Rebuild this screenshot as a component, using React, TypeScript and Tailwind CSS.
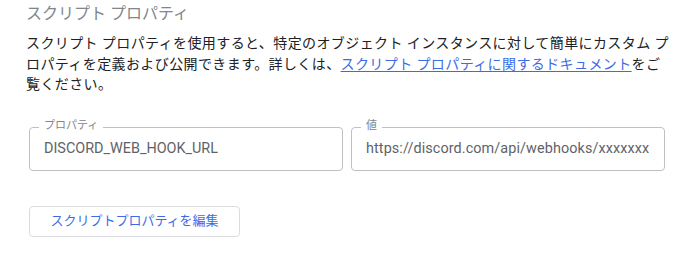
export default function App() {
  return (
    <div className="bg-white w-[700px] h-[253px] px-[26px] pt-[2px] font-['Roboto','Noto_Sans_CJK_JP',sans-serif]">
      <h2 className="text-[16px] leading-[24px] text-[#80868b] font-normal">スクリプト プロパティ</h2>
      <p className="mt-[7px] w-[660px] text-[14px] leading-[20.5px] tracking-[0.4px] text-[#202124] whitespace-nowrap">
        スクリプト プロパティを使用すると、特定のオブジェクト インスタンスに対して簡単にカスタム プ
        <br />
        ロパティを定義および公開できます。詳しくは、
        <a className="text-[#3d6be6] underline underline-offset-2" href="#">スクリプト プロパティに関するドキュメント</a>
        をご
        <br />
        覧ください。
      </p>
      <div className="mt-[32px] ml-[3px] flex gap-[8px]">
        <div className="relative w-[314px] h-[44px] border border-[#bdc1c6] rounded-[4px] flex items-center px-[14px]">
          <span className="absolute -top-[9px] left-[9px] bg-white px-[5px] text-[11px] leading-[14px] text-[#80868b]">プロパティ</span>
          <span className="text-[14.4px] text-[#5f6368] font-['Roboto',sans-serif] whitespace-nowrap overflow-hidden">DISCORD_WEB_HOOK_URL</span>
        </div>
        <div className="relative w-[314px] h-[44px] border border-[#bdc1c6] rounded-[4px] flex items-center px-[14px]">
          <span className="absolute -top-[9px] left-[9px] bg-white px-[5px] text-[11px] leading-[14px] text-[#80868b]">値</span>
          <span className="text-[14.4px] tracking-[0.1px] text-[#5f6368] font-['Roboto',sans-serif] whitespace-nowrap overflow-hidden">https://discord.com/api/webhooks/xxxxxxx</span>
        </div>
      </div>
      <button className="mt-[35px] ml-[3px] w-[211px] h-[31px] border border-[#dadce0] rounded-[4px] bg-white text-[13px] text-[#3d6be6] flex items-center justify-center">
        スクリプトプロパティを編集
      </button>
    </div>
  );
}
